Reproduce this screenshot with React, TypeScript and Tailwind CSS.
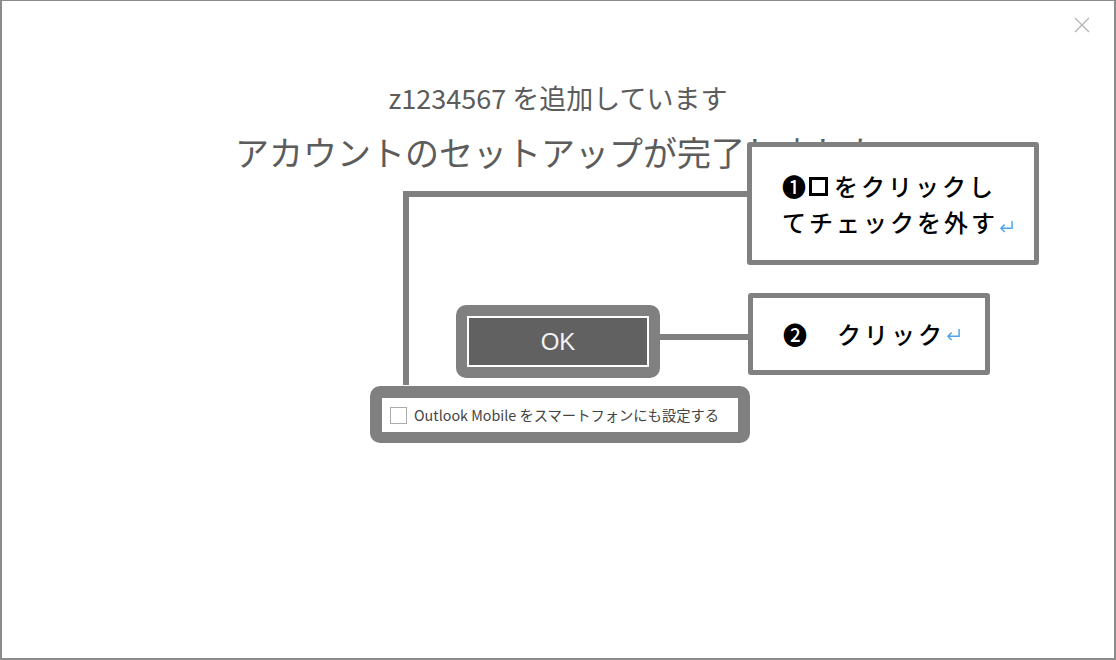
const jp = { fontFamily: '"Noto Sans CJK JP", "Noto Sans", sans-serif' };

function Callout({ className, children }: { className: string; children: React.ReactNode }) {
  return (
    <div
      className={`absolute bg-white border-[5px] border-[#808080] rounded-[3px] text-[24px] text-black tracking-[3px] ${className}`}
      style={jp}
    >
      {children}
    </div>
  );
}

const Ret = () => (
  <svg viewBox="0 0 16 14" className="inline-block w-[15px] h-[13px] ml-[1px] align-[-1px]" fill="none" stroke="#4ea6ee" strokeWidth="1.6">
    <path d="M14 1V9H2M6 5L2 9L6 13" />
  </svg>
);

export default function App() {
  return (
    <div className="relative w-[1116px] h-[660px] bg-white border-2 border-t border-[#8c8c8c] overflow-hidden">
      <button className="absolute top-[16px] right-[24px] w-[16px] h-[16px]">
        <svg viewBox="0 0 16 16" className="w-full h-full" stroke="#b4b4b4" strokeWidth="1.3">
          <path d="M1 1L15 15M15 1L1 15" />
        </svg>
      </button>

      <div className="flex flex-col items-center pt-[79px]" style={jp}>
        <p className="text-[27px] leading-[36px] text-[#5c5c5c]">z1234567 を追加しています</p>
        <h1 className="mt-[14px] text-[34px] leading-[44px] text-[#5c5c5c]">アカウントのセットアップが完了しました</h1>

        <div className="mt-[131px] p-[11px] bg-[#808080] rounded-[10px]">
          <div
            className="w-[182px] h-[51px] border-2 border-white bg-[#616161] flex items-center justify-center text-[24px] text-[#f2f2f2]"
            style={{ fontFamily: '"Liberation Sans", Arial, sans-serif' }}
          >
            OK
          </div>
        </div>

        <div className="mt-[8px] ml-[4px] w-[380px] h-[57px] px-[12px] pt-[12px] pb-[11px] bg-[#808080] rounded-[10px]">
          <div className="h-full bg-white flex items-center pl-[8px] gap-[7px] text-[14.3px] text-[#444]">
            <span className="w-[17px] h-[17px] border border-[#ababab] bg-white" />
            <span>Outlook Mobile をスマートフォンにも設定する</span>
          </div>
        </div>
      </div>

      {/* connector lines */}
      <div className="absolute left-[401px] top-[190px] w-[346px] h-[6px] bg-[#808080]" />
      <div className="absolute left-[401px] top-[190px] w-[6px] h-[194px] bg-[#808080]" />
      <div className="absolute left-[658px] top-[333px] w-[92px] h-[6px] bg-[#808080]" />

      <Callout className="left-[745px] top-[141px] w-[292px] h-[123px] pl-[30px] pt-[21px] leading-[36px] font-medium">
        <div className="flex items-center">
          <span>❶</span>
          <span className="inline-block w-[19px] h-[19px] border-[3px] border-black mr-[6px]" />
          <span>をクリックし</span>
        </div>
        <div>
          てチェックを外す<Ret />
        </div>
      </Callout>

      <Callout className="left-[746px] top-[292px] w-[242px] h-[82px] pl-[30px] flex items-center font-medium">
        <span>❷　クリック</span>
        <Ret />
      </Callout>
    </div>
  );
}
